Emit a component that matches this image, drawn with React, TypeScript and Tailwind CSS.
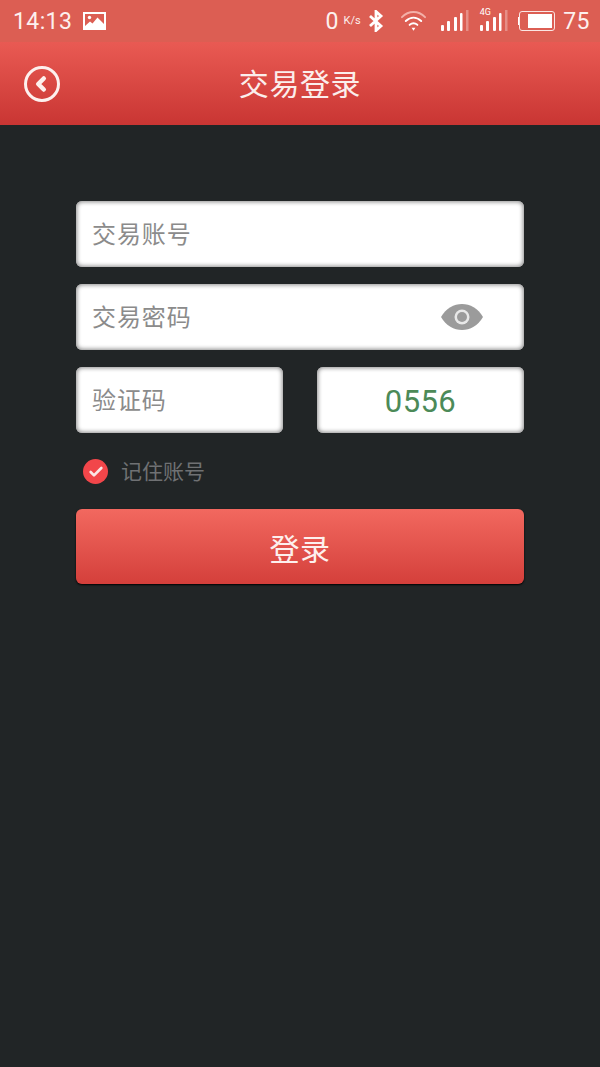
import { Check, ChevronLeft } from 'lucide-react';

const cjk = "font-['Roboto','Noto_Sans_CJK_SC',sans-serif]";

const SignalBars = () => (
    <svg width="28" height="24" viewBox="0 0 28 24" fill="#fff">
        <rect x="0" y="15" width="3" height="6" rx="1" />
        <rect x="6" y="11" width="3" height="10" rx="1" />
        <rect x="13" y="7" width="3" height="14" rx="1" />
        <rect x="19" y="3" width="2.5" height="18" rx="1" />
        <rect x="25" y="0" width="2.5" height="21" fill="#fff" opacity="0.3" />
    </svg>
);

const StatusBar = () => (
    <div className="h-[42px] shrink-0 bg-[#dc5e53] flex items-center justify-between pl-[13px] pr-[10px] text-[#fdf0ee]">
        <div className="flex items-center gap-[11px]">
            <span className={`${cjk} text-[23px] leading-none tracking-[0.4px]`}>14:13</span>
            <svg width="23" height="18" viewBox="0 0 23 18">
                <rect width="23" height="18" fill="#fff" />
                <rect x="2" y="2" width="19" height="12" fill="#dc5e53" />
                <circle cx="6.5" cy="5.5" r="1.7" fill="#fff" />
                <path d="M2 14 L7 9.5 L9.5 11.5 L14.5 5.5 L21 12 L21 15 L2 15 Z" fill="#fff" />
            </svg>
        </div>
        <div className="flex items-center">
            <span className={`${cjk} text-[23px] leading-none`}>0</span>
            <span className={`${cjk} text-[11px] leading-none ml-[5px] mr-[7px] mt-[-1px]`}>K/s</span>
            <svg width="16" height="22" viewBox="0 0 16 22" fill="none" stroke="#fff" strokeWidth="2.8">
                <path d="M2 6 L13 16 L8 20.5 L8 1.5 L13 6 L2 16" />
            </svg>
            <svg className="ml-[16px]" width="27" height="22" viewBox="0 0 28 22" fill="none" strokeLinecap="round">
                <path d="M2 7 C9 0 19 0 26 7" stroke="#f3b0a8" strokeWidth="2" />
                <path d="M6 11 C11 6.5 17 6.5 22 11" stroke="#fff" strokeWidth="2" />
                <path d="M10 15 C12.5 13 15.500 13 18 15" stroke="#fff" strokeWidth="2" />
                <path d="M12 18 L16 18 L14 21 Z" fill="#fff" />
            </svg>
            <div className="ml-[14px] mt-[2px]"><SignalBars /></div>
            <div className="ml-[11px] mt-[2px] relative">
                <SignalBars />
                <span className="absolute left-0 top-[-2px] text-[9px] leading-none font-['Roboto',sans-serif] text-white">4G</span>
            </div>
            <div className="ml-[10px] flex items-center">
                <div className="w-[1.5px] h-[8px] bg-[#fff]" />
                <div className="w-[36px] h-[20px] border-[1.5px] border-[#fbe6e3] rounded-[3px] flex justify-end p-[2px]">
                    <div className="w-[24px] h-full bg-white" />
                </div>
            </div>
            <span className={`${cjk} text-[23px] leading-none ml-[8px] tracking-[0.5px]`}>75</span>
        </div>
    </div>
);

const Header = () => (
    <header className="h-[83px] shrink-0 relative flex items-center justify-center bg-gradient-to-b from-[#e95a53] to-[#c93533] pt-[3px]">
        <div className="absolute left-[24px] top-[24px] w-[36px] h-[36px] rounded-full border-[3px] border-[#fdf0ee] flex items-center justify-center">
            <ChevronLeft size={22} strokeWidth={5} className="text-[#fdf0ee] ml-[-3px]" />
        </div>
        <h1 className={`${cjk} text-[30px] leading-none font-normal text-[#fbeeec] tracking-[0.6px]`}>交易登录</h1>
    </header>
);

const fieldClass = 'h-[66px] bg-white rounded-[6px] shadow-[inset_0_0_4px_1px_#8a8a8a] flex items-center';

const App = () => {
    return (
        <div className="w-[600px] h-[1067px] flex flex-col bg-[#212526] overflow-hidden">
            <StatusBar />
            <Header />

            <main className={`${cjk} flex flex-col px-[76px] pt-[76px]`}>
                <div className="flex flex-col gap-[17px]">
                    <div className={`${fieldClass} pl-[16px] pt-[2px]`}>
                        <span className="text-[24px] leading-none text-[#8b8b8b] tracking-[0.9px]">交易账号</span>
                    </div>

                    <div className={`${fieldClass} pl-[16px] pr-[41px] justify-between`}>
                        <span className="text-[24px] leading-none text-[#8b8b8b] tracking-[0.9px] pt-[2px]">交易密码</span>
                        <svg width="42" height="26" viewBox="0 0 42 26">
                            <path d="M0 13 C10 -4.300 32 -4.300 42 13 C32 30.300 10 30.300 0 13 Z" fill="#9b9b9b" />
                            <circle cx="21" cy="13" r="7.500" fill="#e8e8e8" />
                            <circle cx="21" cy="13" r="5" fill="#9b9b9b" />
                        </svg>
                    </div>

                    <div className="flex justify-between">
                        <div className={`${fieldClass} w-[207px] pl-[16px] pt-[2px]`}>
                            <span className="text-[24px] leading-none text-[#8b8b8b] tracking-[0.9px]">验证码</span>
                        </div>
                        <div className={`${fieldClass} w-[207px] justify-center pt-[3px]`}>
                            <span className="text-[31px] leading-none text-[#4c8a58] tracking-[0.4px]">0556</span>
                        </div>
                    </div>
                </div>

                <div className="flex items-center h-[25px] mt-[26px] pl-[7px]">
                    <div className="w-[25px] h-[25px] rounded-full bg-[#f2464a] flex items-center justify-center">
                        <Check size={16} strokeWidth={4} className="text-[#fbe6e6]" />
                    </div>
                    <span className="ml-[13px] pt-[2px] text-[21px] leading-none text-[#6f7173]">记住账号</span>
                </div>

                <button className="mt-[25px] h-[75px] rounded-[6px] bg-gradient-to-b from-[#f2685f] to-[#d43f3b] shadow-[0_1px_2px_#000] flex items-center justify-center pt-[6px]">
                    <span className="text-[30px] leading-none text-[#fdf0ee] tracking-[0.6px]">登录</span>
                </button>
            </main>
        </div>
    );
};

export default App;
